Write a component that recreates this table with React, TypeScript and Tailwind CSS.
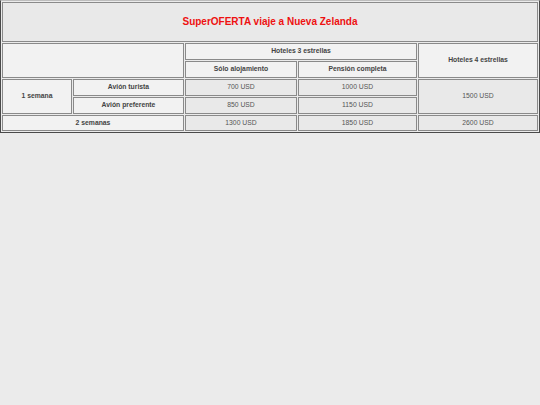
import React from "react";

const cell = "border border-[#8a8a8a] p-0 text-center align-middle";
const head = `${cell} bg-[#f2f2f2] font-bold text-[#444444]`;
const data = `${cell} bg-[#e9e9e9] text-[#555555]`;

export default function App() {
  return (
    <div className="min-h-[405px] w-[540px] bg-[#ebebeb] font-['Liberation_Sans',Arial,sans-serif] text-[6.8px] leading-none">
      <table className="w-[540px] border-separate border-spacing-[1px] border border-t-[#bdbdbd] border-l-[#4a4a4a] border-r-[#4a4a4a] border-b-[#4a4a4a] bg-[#ebebeb]">
        <colgroup>
          <col className="w-[70px]" />
          <col className="w-[111px]" />
          <col className="w-[112px]" />
          <col className="w-[119px]" />
          <col />
        </colgroup>
        <tbody>
          <tr>
            <td colSpan={5} className={`${cell} h-[40px] bg-[#e9e9e9] text-[10px] font-bold text-[#ee1111]`}>
              SuperOFERTA viaje a Nueva Zelanda
            </td>
          </tr>
          <tr>
            <td colSpan={2} rowSpan={2} className={`${head}`}></td>
            <td colSpan={2} className={`${head} h-[17px]`}>Hoteles 3 estrellas</td>
            <td rowSpan={2} className={`${head}`}>Hoteles 4 estrellas</td>
          </tr>
          <tr>
            <td className={`${head} h-[17px]`}>Sólo alojamiento</td>
            <td className={`${head}`}>Pensión completa</td>
          </tr>
          <tr>
            <td rowSpan={2} className={`${head}`}>1 semana</td>
            <td className={`${head} h-[17px]`}>Avión turista</td>
            <td className={data}>700 USD</td>
            <td className={data}>1000 USD</td>
            <td rowSpan={2} className={data}>1500 USD</td>
          </tr>
          <tr>
            <td className={`${head} h-[17px]`}>Avión preferente</td>
            <td className={data}>850 USD</td>
            <td className={data}>1150 USD</td>
          </tr>
          <tr>
            <td colSpan={2} className={`${head} h-[16px]`}>2 semanas</td>
            <td className={data}>1300 USD</td>
            <td className={data}>1850 USD</td>
            <td className={data}>2600 USD</td>
          </tr>
        </tbody>
      </table>
    </div>
  );
}
